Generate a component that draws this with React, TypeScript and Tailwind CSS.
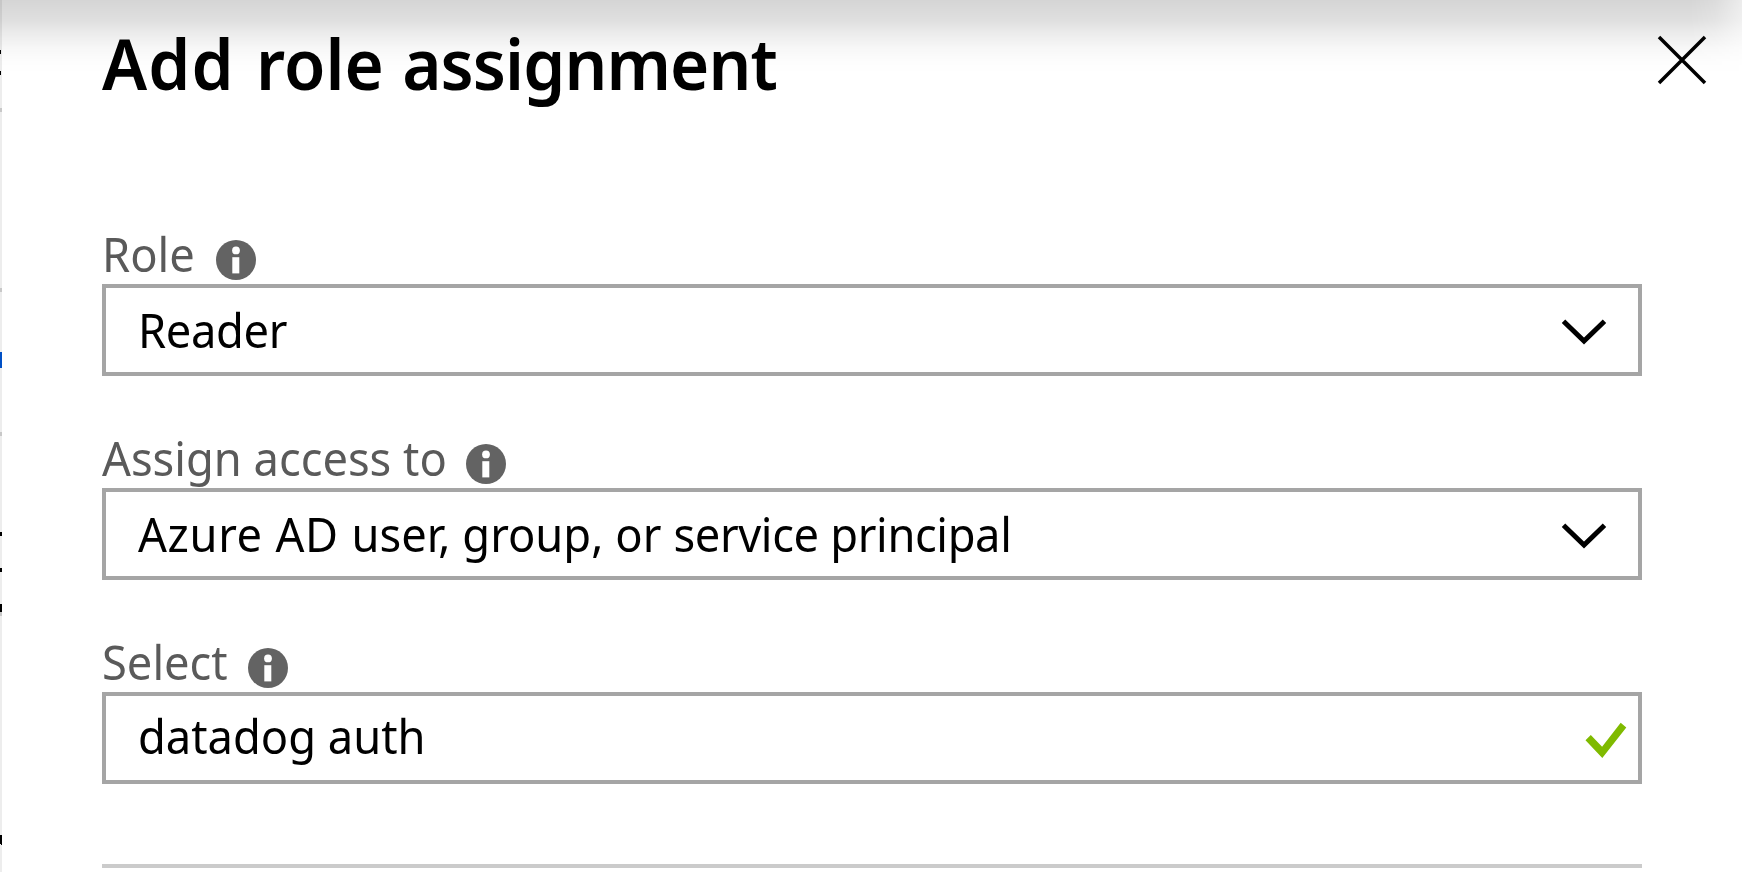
import type { ReactNode } from "react";

function InfoIcon() {
  return (
    <svg className="mt-4 size-10 shrink-0" viewBox="0 0 40 40" aria-hidden="true">
      <circle cx="20" cy="20" r="20" fill="#636363" />
      <circle cx="20" cy="10.4" r="3.9" fill="#fff" />
      <rect x="16.3" y="17.2" width="7" height="16.2" fill="#fff" />
    </svg>
  );
}

function ChevronIcon() {
  return (
    <svg className="mt-[4px] h-[28px] w-[46px] shrink-0" viewBox="0 0 46 28" fill="none" stroke="#000" strokeWidth="5" aria-hidden="true">
      <path d="M2.5 3.2 23 23 43.5 3.2" />
    </svg>
  );
}

function CheckIcon() {
  return (
    <svg className="mt-[4px] h-[36px] w-[42px] shrink-0" viewBox="0 0 42 36" fill="#7fba00" aria-hidden="true">
      <path d="M.5 18.2 5.8 13 17.1 24.8 35.7.8 41.3 5.4 17.3 36Z" />
    </svg>
  );
}

type FieldProps = {
  label: string;
  labelClass: string;
  value: ReactNode;
  valueClass: string;
  iconClass: string;
  icon: ReactNode;
};

function Field({ label, labelClass, value, valueClass, iconClass, icon }: FieldProps) {
  return (
    <div>
      <div className="flex h-[60px] items-start">
        <span className={`shrink-0 origin-left scale-x-[0.943] whitespace-nowrap text-[48px] leading-[60px] text-[#5a5a5a] ${labelClass}`}>{label}</span>
        <InfoIcon />
      </div>
      <div className={`flex h-[92px] items-center justify-between border-4 border-[#a5a5a5] bg-white pl-8 ${iconClass}`}>
        <span className={`origin-left scale-x-[0.943] whitespace-nowrap text-[48px] leading-[64px] text-black ${valueClass}`}>{value}</span>
        {icon}
      </div>
    </div>
  );
}

function PageEdge() {
  return (
    <svg className="h-full w-[2px] shrink-0 bg-[#ededed]" viewBox="0 0 2 872" shapeRendering="crispEdges" aria-hidden="true">
      <path fill="#000" d="M0 50h1v4H0zM0 71h1v4H0zM0 532h2v4H0zM0 568h2v4H0zM0 604h2v8H0zM0 835h2v9l-1 1-1-3z" />
      <path fill="#c8c8c8" d="M0 108h2v4H0zM0 288h2v4H0zM0 432h2v4H0zM0 612h2v4H0z" />
      <path fill="#0050c5" d="M0 352h2v16H0z" />
    </svg>
  );
}

export default function App() {
  return (
    <div className="relative flex h-[872px] w-[1742px] overflow-hidden bg-white font-['Noto_Sans',sans-serif]">
      <PageEdge />
      <main className="relative z-10 flex w-[1740px] flex-col pl-[100px]">
        <header className="flex h-[224px] items-start justify-between pr-[35px]">
          <h1 className="origin-left scale-x-[0.947] pt-[15px] text-[71px] font-semibold leading-[96px] whitespace-nowrap text-black [word-spacing:4px]">
            <span className="tracking-[1.2px]">Add</span> role <span className="-ml-[3px] tracking-[-0.95px]">assignment</span>
          </h1>
          <button className="mt-[35px]" aria-label="Close">
            <svg className="size-[50px]" viewBox="0 0 50 50" fill="none" stroke="#000" strokeWidth="3.5" aria-hidden="true">
              <path d="M2 2 48 48M48 2 2 48" />
            </svg>
          </button>
        </header>
        <form className="flex w-[1540px] flex-col gap-[52px]">
          <Field label="Role" labelClass="w-[114px]" value="Reader" valueClass="tracking-[-0.35px]" iconClass="pr-[31px]" icon={<ChevronIcon />} />
          <Field
            label="Assign access to"
            labelClass="w-[364px]"
            value={
              <>
                <span className="tracking-[0.7px]">Azure AD </span>
                <span>user, group, or </span>
                <span className="tracking-[-0.4px]">service principal</span>
              </>
            }
            valueClass="[word-spacing:0.3px]"
            iconClass="pr-[31px]"
            icon={<ChevronIcon />}
          />
          <Field label="Select" labelClass="w-[146px]" value="datadog auth" valueClass="pb-[4px]" iconClass="pr-[11px]" icon={<CheckIcon />} />
        </form>
        <hr className="mt-20 h-1 w-[1540px] shrink-0 border-0 bg-[#cbcbcb]" />
      </main>
      <div className="pointer-events-none absolute inset-x-0 top-0 h-[80px] bg-[linear-gradient(to_bottom,rgba(0,0,0,0.165)_0px,rgba(0,0,0,0.15)_8px,rgba(0,0,0,0.12)_22px,rgba(0,0,0,0.075)_34px,rgba(0,0,0,0.03)_48px,rgba(0,0,0,0.008)_62px,transparent_74px)] [mask-image:linear-gradient(to_right,#000_0,#000_1690px,rgba(0,0,0,0.85)_1715px,rgba(0,0,0,0.45)_1742px)]" />
    </div>
  );
}
